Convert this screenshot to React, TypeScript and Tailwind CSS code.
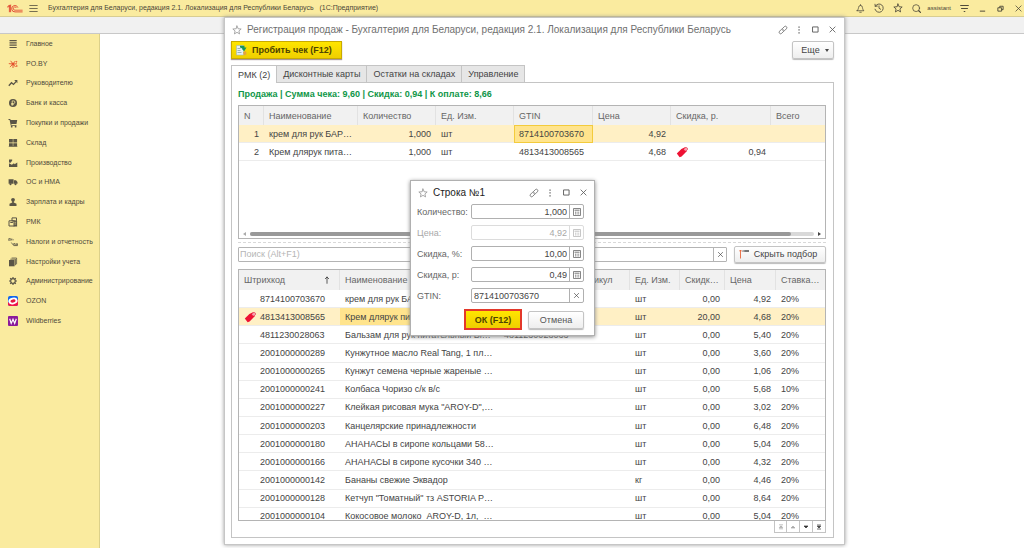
import { useState, type ReactNode } from "react";
import clsx from "clsx";

type IconProps = { className?: string };

type Sale = {
  n: number;
  name: string;
  qty: string;
  unit: string;
  gtin: string;
  price: string;
  discount?: string;
};

type Product = {
  code: string;
  name: string;
  gtin?: string;
  unit: string;
  discount: string;
  price: string;
  rate: string;
};

const sales: Sale[] = [
  { n: 1, name: "крем для рук БАР…", qty: "1,000", unit: "шт", gtin: "8714100703670", price: "4,92" },
  { n: 2, name: "Крем длярук пита…", qty: "1,000", unit: "шт", gtin: "4813413008565", price: "4,68", discount: "0,94" },
];

const products: Product[] = [
  { code: "8714100703670", name: "крем для рук БА…", unit: "шт", discount: "0,00", price: "4,92", rate: "20%" },
  { code: "4813413008565", name: "Крем длярук пит…", unit: "шт", discount: "20,00", price: "4,68", rate: "20%" },
  { code: "4811230028063", name: "Бальзам для рук питательный Ві…", gtin: "4811230028063", unit: "шт", discount: "0,00", price: "5,40", rate: "20%" },
  { code: "2001000000289", name: "Кунжутное масло Real Tang, 1 пл…", unit: "шт", discount: "0,00", price: "3,60", rate: "20%" },
  { code: "2001000000265", name: "Кунжут семена черные жареные …", unit: "шт", discount: "0,00", price: "1,06", rate: "20%" },
  { code: "2001000000241", name: "Колбаса Чоризо с/к в/с", unit: "шт", discount: "0,00", price: "5,68", rate: "10%" },
  { code: "2001000000227", name: 'Клейкая рисовая мука "AROY-D",…', unit: "шт", discount: "0,00", price: "3,02", rate: "20%" },
  { code: "2001000000203", name: "Канцелярские принадлежности", unit: "шт", discount: "0,00", price: "6,48", rate: "20%" },
  { code: "2001000000180", name: "АНАНАСЫ в сиропе кольцами 58…", unit: "шт", discount: "0,00", price: "5,04", rate: "20%" },
  { code: "2001000000166", name: "АНАНАСЫ в сиропе кусочки 340 …", unit: "шт", discount: "0,00", price: "4,32", rate: "20%" },
  { code: "2001000000142", name: "Бананы свежие Эквадор", unit: "кг", discount: "0,00", price: "4,46", rate: "20%" },
  { code: "2001000000128", name: 'Кетчуп "Томатный" тз ASTORIA Р…', unit: "шт", discount: "0,00", price: "8,64", rate: "20%" },
  { code: "2001000000104", name: "Кокосовое молоко  AROY-D, 1л,  …", unit: "шт", discount: "0,00", price: "5,04", rate: "20%" },
];

function Line({ children, className }: { children: ReactNode; className?: string }) {
  return (
    <svg
      viewBox="0 0 12 12"
      fill="none"
      stroke="currentColor"
      strokeLinecap="round"
      strokeLinejoin="round"
      className={clsx("shrink-0", className)}
      aria-hidden="true"
    >
      {children}
    </svg>
  );
}

function Star({ className }: IconProps) {
  return (
    <Line className={className}>
      <path d="M6 1.2 7.4 4.5 11 4.8 8.3 7.1 9.1 10.7 6 8.8 2.9 10.7 3.7 7.1 1 4.8 4.6 4.5Z" />
    </Line>
  );
}

function LinkIcon({ className }: IconProps) {
  return (
    <Line className={className}>
      <path d="M5.4 4.200 7.600 2a1.700 1.700 0 0 1 2.500 2.500L8 6.700a1.700 1.700 0 0 1-2.400-.1M6.600 7.800 4.400 10a1.700 1.700 0 0 1-2.500-2.500L4 5.300a1.700 1.700 0 0 1 2.400.1" strokeWidth=".9" />
    </Line>
  );
}

function Dots({ className }: IconProps) {
  return (
    <svg viewBox="0 0 12 12" fill="currentColor" className={className} aria-hidden="true">
      <path d="M5.3 1.8h1.500v1.500H5.3zM5.300 5.200h1.500v1.500H5.300zM5.300 8.600h1.500v1.500H5.300z" />
    </svg>
  );
}

function Maximize({ className }: IconProps) {
  return (
    <Line className={className}>
      <path d="M3.2 3.2h5.6v5.6H3.2z" />
    </Line>
  );
}

function Cross({ className }: IconProps) {
  return (
    <Line className={className}>
      <path d="m3.200 3.200 5.600 5.600M8.800 3.200 3.200 8.800" strokeWidth=".9" />
    </Line>
  );
}

function Tag() {
  return (
    <svg viewBox="0 0 12 12" className="size-3 shrink-0" aria-hidden="true">
      <path d="M.8 7.4 5.4 2.9 9 1.2l2 .8-.5 3.6-4.9 4.9-2 .7Z" fill="#ee1133" />
      <path d="M7.8 3.6c.3-2 2.600-2.600 3.500-1.600s.1 2.600-2 3" fill="#f9a0ae" stroke="#e2304a" strokeWidth=".6" />
    </svg>
  );
}

function Calculator() {
  return (
    <svg viewBox="0 0 8 8" className="size-2 opacity-80" aria-hidden="true">
      <path d="M.5.5h7v7h-7z" fill="none" stroke="currentColor" strokeWidth=".8" />
      <path d="M1.500 2.200h5M2 4.200h1M3.600 4.200h1M5.200 4.200h1M2 5.900h1M3.600 5.900h1M5.200 5.900h1" stroke="currentColor" strokeWidth=".9" />
    </svg>
  );
}

function Logo() {
  return (
    <svg viewBox="0 0 16 9" className="h-[9px] w-4 shrink-0" fill="none" stroke="#e0402c" aria-hidden="true">
      <path d="M.4 2.700 2.400 1.300v6.900M.9 3.500 3.600.8v7.400" strokeWidth=".9" />
      <path d="M10.900 3.600A3.200 3.200 0 1 0 8 7.900h7.600" strokeWidth=".9" />
      <path d="M9.400 4A1.600 1.600 0 1 0 8 6.200h7.600" strokeWidth=".8" />
    </svg>
  );
}

function Glyph({ children }: { children: ReactNode }) {
  return (
    <svg viewBox="0 0 10 10" className="size-[10px] shrink-0 text-[#5a5546]" fill="currentColor" aria-hidden="true">
      {children}
    </svg>
  );
}

const menu: { label: string; icon: ReactNode }[] = [
  { label: "Главное", icon: <path d="M1.500 1h7.200v1.200H1.500zM1.500 3.300h7.200v1.200H1.500zM1.500 5.600h7.200v1.200H1.500zM1.500 7.900h7.200v1.200H1.500z" /> },
  {
    label: "PO.BY",
    icon: (
      <g stroke="#e3502e" strokeWidth=".9" fill="#e3502e">
        <path d="M5 5 2.600 1.800M5 5l2.300-3M5 5l4-.2M5 5l2.600 3M5 5v4M5 5 1.900 8M5 5 .8 4.600" />
        <circle cx="5" cy="5" r="1" />
        <circle cx="8.500" cy="2.800" r=".4" />
        <circle cx="8.800" cy="7" r=".4" />
      </g>
    ),
  },
  {
    label: "Руководителю",
    icon: (
      <>
        <path d="M.8 7.800 3.500 4.700l2 1.700 2.800-3" fill="none" stroke="currentColor" strokeWidth="1.300" />
        <path d="M6.200 2h3.200v3.200Z" />
      </>
    ),
  },
  {
    label: "Банк и касса",
    icon: (
      <>
        <circle cx="5" cy="5" r="4" />
        <path d="M4.200 7.800V2.900h1.400a1.300 1.300 0 0 1 0 2.600H3.200M3.200 6.600h2.600" fill="none" stroke="#faeb9f" strokeWidth=".8" />
      </>
    ),
  },
  {
    label: "Покупки и продажи",
    icon: (
      <>
        <path d="M.5 1h1.800l.3 1h6.600L8.500 6H3.300l.2.900h5v.9H2.800L1.600 1.900H.5z" />
        <circle cx="3.700" cy="8.700" r=".9" />
        <circle cx="7.600" cy="8.700" r=".9" />
      </>
    ),
  },
  { label: "Склад", icon: <path d="M1 1h3.800v3.600H1zM5.300 1h3.800v3.600H5.300zM1 5.200h3.800v2.800H1zM5.300 5.200h3.800v2.800H5.300zM.8 8.300h8.500v.8H.8z" /> },
  { label: "Производство", icon: <path d="M1 9V5.200l2.800 1.500L6 5.200l.6 1 2.700-1.600V9zM1 4.500V1.500h3.200v.9L2.600 4.800z" /> },
  {
    label: "ОС и НМА",
    icon: (
      <>
        <path d="M.6 2.300h5v4.500h-5zM6 3.300h2l1.500 1.800v1.700H6z" />
        <circle cx="2.500" cy="7.200" r="1" />
        <circle cx="7.500" cy="7.200" r="1" />
      </>
    ),
  },
  {
    label: "Зарплата и кадры",
    icon: (
      <>
        <circle cx="5" cy="2.800" r="1.900" />
        <path d="M4.200 4h1.600v1.500l2.700 1.200V9h-7V6.700l2.700-1.200z" />
      </>
    ),
  },
  {
    label: "РМК",
    icon: (
      <>
        <path d="M1 3.800h5.500V9H1zM4 .9h4.500v3H4z" fill="none" stroke="currentColor" />
        <path d="M2.300 5h2.600v.9H2.300zM5.500 4h3.600v5.400H5.500z" />
        <path d="M6.400 5.300h1.800M6.400 7h1.800" stroke="#faeb9f" strokeWidth=".6" />
      </>
    ),
  },
  {
    label: "Налоги и отчетность",
    icon: (
      <g fill="none" stroke="currentColor" strokeWidth=".8">
        <path d="M.8 3.800V1.600h1.600l-.6 2.200M3 3.700l.8-2.200M4.300 2.800h1.400M3.300 5.500l1.800 2.400M5.700 8.700V6.600h1.400v2M8.300 8.600V6.700h1.200v1.900H5.800" />
      </g>
    ),
  },
  {
    label: "Настройки учета",
    icon: (
      <>
        <path d="M1 3h5.600v6.300H1z" />
        <path d="M2.300 2.200h5.200v6M3.600 1h5v6.300" fill="none" stroke="currentColor" strokeWidth=".8" />
      </>
    ),
  },
  {
    label: "Администрирование",
    icon: (
      <g fill="none" stroke="currentColor">
        <circle cx="5" cy="5" r="2.300" strokeWidth="1.200" />
        <path d="M5 1v1.400M5 7.600V9M1 5h1.400M7.600 5H9M2.200 2.200l1 1M6.800 6.800l1 1M2.200 7.800l1-1M6.800 3.200l1-1" strokeWidth="1.200" />
      </g>
    ),
  },
  {
    label: "OZON",
    icon: (
      <>
        <rect width="10" height="10" rx="1.800" fill="#1166ee" />
        <path d="M0 6.500 10 3.500v4.700A1.800 1.800 0 0 1 8.200 10H1.800A1.800 1.800 0 0 1 0 8.200z" fill="#f0164a" />
        <ellipse cx="5" cy="5" rx="4.600" ry="3.300" fill="#fff" transform="rotate(-12 5 5)" />
        <ellipse cx="5" cy="5" rx="2.600" ry="1.600" fill="#e5173f" transform="rotate(-12 5 5)" />
      </>
    ),
  },
  {
    label: "Wildberries",
    icon: (
      <>
        <rect width="10" height="10" rx="1" fill="#8b1a9b" />
        <path d="m1.700 2.800 1.500 4.600L5 3.200l1.700 4.200 1.600-4.600" fill="none" stroke="#fff" strokeWidth="1.200" />
      </>
    ),
  },
];

function TopBar() {
  return (
    <header className="flex h-[17px] items-center border-b border-[#d8cd92] bg-[#faeb9f] pr-[1px] pl-[7px] text-[#4a4638]">
      <Logo />
      <button type="button" aria-label="Меню" className="ml-[6px]">
        <Line className="size-[9px]">
          <path d="M1 2h10M1 6h10M1 10h10" />
        </Line>
      </button>
      <h1 className="ml-[10px] flex-1 truncate text-[7px]">
        Бухгалтерия для Беларуси, редакция 2.1. Локализация для Республики Беларусь &nbsp; (1С:Предприятие)
      </h1>
      <div className="flex items-center gap-[9px]">
        <button type="button" aria-label="Уведомления">
          <Line className="size-[9px]">
            <path d="M1.500 9h9C9 7.500 9 6.500 8.500 4.500a2.500 2.500 0 0 0-5 0C3 6.500 3 7.500 1.500 9ZM5 11h2M6 .8v1" />
          </Line>
        </button>
        <button type="button" aria-label="История">
          <Line className="size-[10px]">
            <path d="M1.500 4A5 5 0 1 1 1.200 7.500M1.200 1.500 1.500 4l2.500-.3M6 3.500V6.300l2 1.200" />
          </Line>
        </button>
        <button type="button" aria-label="Избранное">
          <Star className="size-[10px]" />
        </button>
        <button type="button" aria-label="Поиск">
          <Line className="size-[9px]">
            <circle cx="5.500" cy="5.500" r="4.600" />
            <path d="m9 9 2.300 2.300" strokeWidth="1.500" />
          </Line>
        </button>
        <a href="#user" className="-ml-[3px] text-[6px]">assistant</a>
        <button type="button" aria-label="Настройки">
          <Line className="size-[9px]">
            <path d="M.8 2h10.400M2 6h8M5.500 10h1" strokeWidth="1.300" />
          </Line>
        </button>
        <button type="button" aria-label="Свернуть">
          <Line className="size-[9px]">
            <path d="M3 9.500h6" strokeWidth="1.300" />
          </Line>
        </button>
        <button type="button" aria-label="Восстановить">
          <Line className="size-[9px]">
            <path d="M3 5h4.500v4.500H3zM5 4.500V3h4.500v4.500H8" strokeWidth="1.200" />
          </Line>
        </button>
        <button type="button" aria-label="Закрыть">
          <Line className="size-[9px]">
            <path d="m2.500 2.500 7 7M9.500 2.500l-7 7" />
          </Line>
        </button>
      </div>
    </header>
  );
}

function Sidebar() {
  return (
    <nav className="w-[100px] shrink-0 border-r border-[#dcd08a] bg-[#faeb9f]">
      <ul className="grid h-[297px] auto-rows-fr">
        {menu.map((item) => (
          <li key={item.label} className="flex">
            <a href="#" className="flex flex-1 items-center gap-2 whitespace-nowrap pl-2 text-[7px] text-[#4f4a3c]">
              <Glyph>{item.icon}</Glyph>
              {item.label}
            </a>
          </li>
        ))}
      </ul>
    </nav>
  );
}

function WindowButtons() {
  return (
    <div className="flex items-center gap-[6px] text-[#5a5a5a]">
      <button type="button" aria-label="Ссылка">
        <LinkIcon className="size-[10px]" />
      </button>
      <button type="button" aria-label="Ещё">
        <Dots className="size-[10px]" />
      </button>
      <button type="button" aria-label="Развернуть">
        <Maximize className="size-[11px]" />
      </button>
      <button type="button" aria-label="Закрыть">
        <Cross className="size-[11px]" />
      </button>
    </div>
  );
}

const tabs = ["РМК (2)", "Дисконтные карты", "Остатки на складах", "Управление"];

const head = "truncate border-r border-[#e2e2e2] px-[5px] text-left font-normal text-[#666] last:border-r-0";
const cell = "overflow-hidden whitespace-pre border-b border-[#ececec] px-[5px]";
const button = "flex items-center justify-center rounded-[2px] border border-[#c4c4c4] bg-linear-to-b from-white to-[#eee] shadow-[0_1px_1px_#bbb]";

function SalesTable() {
  return (
    <div className="flex h-[134px] flex-col overflow-hidden border border-[#b4b4b4]">
      <table className="w-full table-fixed border-separate border-spacing-0">
        <colgroup>
          <col className="w-[25px]" />
          <col className="w-[94px]" />
          <col className="w-[78px]" />
          <col className="w-[78px]" />
          <col className="w-[79px]" />
          <col className="w-[78px]" />
          <col className="w-[100px]" />
          <col />
        </colgroup>
        <thead>
          <tr className="h-[19px] bg-[#f1f1f1]">
            {["N", "Наименование", "Количество", "Ед. Изм.", "GTIN", "Цена", "Скидка, р.", "Всего"].map((title) => (
              <th key={title} className={head}>{title}</th>
            ))}
          </tr>
        </thead>
        <tbody>
          {sales.map((row, i) => (
            <tr key={row.n} className={clsx("h-[18px]", i === 0 && "bg-[#fff0c5]")}>
              <td className={clsx(cell, "text-right")}>{row.n}</td>
              <td className={cell}>{row.name}</td>
              <td className={clsx(cell, "text-right")}>{row.qty}</td>
              <td className={cell}>{row.unit}</td>
              <td className={clsx(cell, i === 0 && "bg-[#ffe48d] outline outline-[#f3cb3c] -outline-offset-1")}>{row.gtin}</td>
              <td className={clsx(cell, "text-right")}>{row.price}</td>
              <td className={cell}>
                {row.discount && (
                  <span className="flex items-center justify-between">
                    <Tag />
                    {row.discount}
                  </span>
                )}
              </td>
              <td className={cell} />
            </tr>
          ))}
        </tbody>
      </table>
      <div className="mt-auto flex h-[9px] items-center gap-1 px-1 text-[#666]">
        <svg viewBox="0 0 3 4" className="h-1 w-[3px]" fill="#aaa" aria-hidden="true">
          <path d="M3 0v4L0 2z" />
        </svg>
        <div className="h-1 flex-1 rounded-full bg-[#d9d9d9]">
          <div className="h-1 w-24/25 rounded-full bg-[#999]" />
        </div>
        <svg viewBox="0 0 3 4" className="h-1 w-[3px]" fill="#444" aria-hidden="true">
          <path d="M0 0v4l3-2z" />
        </svg>
      </div>
    </div>
  );
}

function ProductTable() {
  return (
    <div className="min-h-0 flex-1 overflow-hidden border border-[#b4b4b4]">
      <table className="h-[256px] w-full table-fixed border-separate border-spacing-0">
        <colgroup>
          <col className="w-[101px]" />
          <col className="w-[159px]" />
          <col className="w-[75px]" />
          <col className="w-[56px]" />
          <col className="w-[50px]" />
          <col className="w-[45px]" />
          <col className="w-[51px]" />
          <col />
        </colgroup>
        <thead>
          <tr className="h-[20px] bg-[#f1f1f1]">
            <th className={head}>
              <span className="flex items-center justify-between pr-[3px]">
                Штрихкод
                <Line className="size-2 text-[#333]">
                  <path d="M6 11V1.500M3.500 4 6 1.500 8.500 4" strokeWidth="1.200" />
                </Line>
              </span>
            </th>
            {["Наименование", "GTIN", "Артикул", "Ед. Изм.", "Скидк…", "Цена", "Ставка…"].map((title) => (
              <th key={title} className={head}>{title}</th>
            ))}
          </tr>
        </thead>
        <tbody>
          {products.map((row, i) => {
            const current = i === 1;
            return (
              <tr key={row.code} className={clsx("h-[18px]", current && "bg-[#fff0c5]")}>
                <td className={cell}>
                  <span className="flex items-center gap-1">
                    <span className="w-3">{current && <Tag />}</span>
                    {row.code}
                  </span>
                </td>
                <td className={clsx(cell, current && "bg-[#ffe48d]")}>{row.name}</td>
                <td className={cell}>{row.gtin}</td>
                <td className={cell} />
                <td className={cell}>{row.unit}</td>
                <td className={clsx(cell, "text-right")}>{row.discount}</td>
                <td className={clsx(cell, "text-right")}>{row.price}</td>
                <td className={cell}>{row.rate}</td>
              </tr>
            );
          })}
        </tbody>
      </table>
    </div>
  );
}

const pager = [
  { label: "В начало", path: "M3 2.800h4M5 3.800l1.700 1.800H3.300zM3 6.800h4", off: true },
  { label: "Вверх", path: "M5 4 7 6H3z", off: true },
  { label: "Вниз", path: "M5 6 7 4H3z", off: false },
  { label: "В конец", path: "M3 3h4M5 6l1.700-1.800H3.300zM3 7h4", off: false },
];

function SalesWindow() {
  const [search, setSearch] = useState("");

  return (
    <section className="absolute top-[17px] bottom-[3px] left-[224px] flex w-[621px] flex-col border border-[#c6c6c6] bg-white px-[6px] pb-[6px] shadow-[0_0_4px_#999]">
      <div className="flex h-[23px] shrink-0 items-center pl-[1px]">
        <Star className="size-[10px] text-[#999]" />
        <h2 className="ml-[5px] flex-1 truncate text-[10px] text-[#707070]">
          Регистрация продаж - Бухгалтерия для Беларуси, редакция 2.1. Локализация для Республики Беларусь
        </h2>
        <WindowButtons />
      </div>

      <div className="flex shrink-0 justify-between pr-[4px]">
        <button
          type="button"
          className="flex h-[18px] items-center gap-[5px] border border-[#c9ab00] bg-linear-to-b from-[#ffe500] to-[#efcf00] pr-[9px] pl-1 font-bold text-[#4d4300] shadow-[0_1px_1px_#a99]"
        >
          <svg viewBox="0 0 11 11" className="size-[11px]" aria-hidden="true">
            <path d="M.5.5h7v9.500h-7z" fill="#e5f0f4" stroke="#9db5bf" strokeWidth=".6" />
            <path d="M1.500 3.500h3M1.500 5.500h3M1.500 7.500h4" stroke="#7896a5" strokeWidth=".7" />
            <path d="M4 .8h4.500v1.700h2L8.200 6.200 5.500 3.500h1.400L4 2.500z" fill="#16945a" />
            <path d="m7 7.200 3-.9.500 3L8 10.500z" fill="#e6a33e" />
          </svg>
          Пробить чек (F12)
        </button>
        <button type="button" className={clsx(button, "h-[18px] w-[42px] gap-[5px] pl-1")}>
          Еще
          <svg viewBox="0 0 4 3" className="h-[3px] w-1" fill="currentColor" aria-hidden="true">
            <path d="M0 0h4L2 3z" />
          </svg>
        </button>
      </div>

      <div className="mt-[6px] flex h-[17px] shrink-0" role="tablist">
        {tabs.map((tab, i) => (
          <button
            key={tab}
            type="button"
            role="tab"
            aria-selected={i === 0}
            className={clsx(
              "border-t border-r border-[#c4c4c4] px-[6px] whitespace-nowrap",
              i === 0 ? "z-10 -mb-px border-l bg-white" : "bg-[#e6e6e6]"
            )}
          >
            {tab}
          </button>
        ))}
      </div>

      <div className="mr-[4px] flex min-h-0 flex-1 flex-col border border-[#c4c4c4] pr-[7px] pb-[4px] pl-[6px]">
        <p className="flex h-[22px] shrink-0 items-center font-bold text-[#0f9648]">
          Продажа | Сумма чека: 9,60 | Скидка: 0,94 | К оплате: 8,66
        </p>
        <div className="shrink-0">
          <SalesTable />
        </div>
        <div className="mt-[3px] shrink-0 border-t border-dashed border-[#d8d8d8]" />

        <div className="my-[2px] flex h-[18px] shrink-0 items-center gap-[7px]">
          <div className="flex h-[15px] flex-1 rounded-[1px] border border-[#b4b4b4]">
            <input
              type="text"
              aria-label="Поиск"
              value={search}
              onChange={(e) => setSearch(e.target.value)}
              placeholder="Поиск (Alt+F1)"
              className="min-w-0 flex-1 px-[1px] outline-none placeholder:text-[#b5b5b5]"
            />
            <button
              type="button"
              aria-label="Очистить"
              onClick={() => setSearch("")}
              className="flex w-[13px] items-center justify-center border-l border-[#b4b4b4]"
            >
              <Cross className="size-[9px]" />
            </button>
          </div>
          <button type="button" className={clsx(button, "h-[17px] w-[92px] gap-[5px] pr-1")}>
            <svg viewBox="0 0 10 10" className="size-[10px]" aria-hidden="true">
              <path d="M1.500 9.500V1M0 2.500 1.500 1 3 2.500" fill="none" stroke="#e8673b" strokeWidth=".9" />
              <path d="M3.600 1h1v2h-1zM5.200 1H10v2H5.200z" fill="#777" />
            </svg>
            Скрыть подбор
          </button>
        </div>

        <div className="mt-[4px] flex min-h-0 flex-1 flex-col">
          <ProductTable />
        </div>
        <div className="flex h-[12px] shrink-0 justify-end">
          {pager.map((item) => (
            <button
              key={item.label}
              type="button"
              aria-label={item.label}
              disabled={item.off}
              className="flex w-[13px] items-center justify-center border-r border-b border-[#c4c4c4] text-[#333] first:border-l disabled:text-[#aaa]"
            >
              <svg viewBox="0 0 10 10" className="size-[10px]" fill="currentColor" stroke="currentColor" strokeWidth=".7" aria-hidden="true">
                <path d={item.path} />
              </svg>
            </button>
          ))}
        </div>
      </div>
    </section>
  );
}

const fields = [
  { id: "qty", label: "Количество:", value: "1,000" },
  { id: "price", label: "Цена:", value: "4,92", disabled: true },
  { id: "percent", label: "Скидка, %:", value: "10,00" },
  { id: "discount", label: "Скидка, р:", value: "0,49" },
  { id: "gtin", label: "GTIN:", value: "8714100703670", text: true },
];

function RowDialog() {
  return (
    <section
      role="dialog"
      aria-labelledby="row-title"
      className="absolute top-[180px] left-[410px] z-20 w-[185px] border border-[#b0b0b0] bg-white pr-[10px] pb-[5px] pl-[6px] shadow-[0_1px_4px_#888]"
    >
      <div className="-mr-[5px] flex h-[23px] items-center pl-[1px]">
        <Star className="size-[10px] text-[#999]" />
        <h2 id="row-title" className="ml-[5px] flex-1 text-[10px] text-[#222]">Строка №1</h2>
        <WindowButtons />
      </div>
      <form onSubmit={(e) => e.preventDefault()}>
        <div className="flex flex-col gap-[6px]">
          {fields.map((field) => (
            <div key={field.id} className={clsx("flex h-[15px] items-center", field.disabled && "text-[#a8a8a8]")}>
              <label htmlFor={field.id} className={clsx("w-[54px] shrink-0 whitespace-nowrap", !field.disabled && "text-[#666]")}>
                {field.label}
              </label>
              <div
                className={clsx(
                  "flex h-[15px] min-w-0 flex-1 rounded-[2px] border",
                  field.disabled ? "border-[#dcdcdc]" : "border-[#b0b0b0]"
                )}
              >
                <input
                  id={field.id}
                  type="text"
                  defaultValue={field.value}
                  disabled={field.disabled}
                  className={clsx("min-w-0 flex-1 px-[2px] outline-none", !field.text && "text-right")}
                />
                <button
                  type="button"
                  disabled={field.disabled}
                  aria-label={field.text ? "Очистить" : "Калькулятор"}
                  className="flex w-[14px] shrink-0 items-center justify-center border-l border-inherit"
                >
                  {field.text ? <Cross className="size-[9px]" /> : <Calculator />}
                </button>
              </div>
            </div>
          ))}
        </div>
        <div className="mt-[6px] flex items-center justify-end gap-[6px]">
          <button
            type="submit"
            className="h-[21px] w-[58px] border-2 border-[#e3382a] bg-linear-to-b from-[#ffe500] to-[#efcf00] font-bold text-[#4d4300]"
          >
            ОК (F12)
          </button>
          <button type="button" className={clsx(button, "h-[18px] w-[56px] text-[#555]")}>
            Отмена
          </button>
        </div>
      </form>
    </section>
  );
}

export default function App() {
  return (
    <div className="relative flex h-screen flex-col overflow-hidden bg-white font-['Liberation_Sans',Arial,sans-serif] text-[9px] leading-[12px] text-[#444]">
      <TopBar />
      <div className="h-[17px] shrink-0 border-b border-[#c8c8c8] bg-[#f1f1f1]" />
      <div className="flex min-h-0 flex-1">
        <Sidebar />
        <main className="flex-1" />
      </div>
      <SalesWindow />
      <RowDialog />
    </div>
  );
}
